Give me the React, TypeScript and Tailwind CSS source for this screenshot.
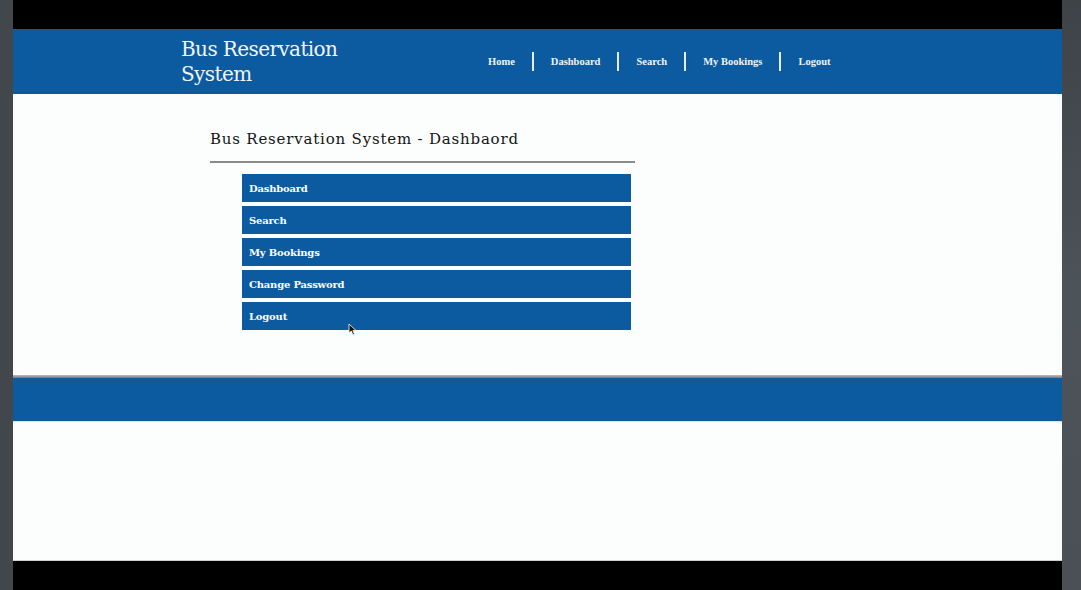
import React from "react";

const NAV = ["Home", "Dashboard", "Search", "My Bookings", "Logout"];
const MENU = ["Dashboard", "Search", "My Bookings", "Change Password", "Logout"];

const serif = "font-['DejaVu_Serif','Liberation_Serif',serif]";

export default function App() {
  return (
    <div className={`flex h-[590px] w-[1081px] overflow-hidden bg-black ${serif}`}>
      <div className="w-[13px] shrink-0 bg-[#41474a]" />

      <div className="flex w-[1049px] shrink-0 flex-col">
        <div className="h-[29px] bg-black" />

        <header className="flex h-[65px] items-center bg-[#0c5a9f] text-white">
          <div className="w-[168px] shrink-0" />
          <h1 className="w-[290px] shrink-0 text-[20px] leading-[25px] tracking-[-0.6px] text-[#f1f6fb]">
            Bus Reservation
            <br />
            System
          </h1>
          <nav className="flex items-center font-['Liberation_Serif',serif]">
            {NAV.map((n, i) => (
              <React.Fragment key={n}>
                {i > 0 && <span className="h-[19px] w-[2px] bg-[#e8eef6]" />}
                <a className="px-[17px] text-[10.5px] font-bold text-[#eef3f9]">{n}</a>
              </React.Fragment>
            ))}
          </nav>
        </header>

        <main className="relative h-[281px] bg-[#fbfefd] pl-[197px] pt-[35px]">
          <h2 className="text-[15px] leading-[20px] tracking-[0.8px] text-[#141414]">
            Bus Reservation System - Dashbaord
          </h2>
          <div className="mt-[12px] h-[2px] w-[425px] bg-[#8a8a8a]" />
          <ul className="ml-[32px] mt-[11px] flex w-[389px] flex-col gap-[4px]">
            {MENU.map((m) => (
              <li
                key={m}
                className="flex h-[28px] items-center bg-[#0c5a9f] pl-[7px] text-[10px] font-bold tracking-[-0.2px] text-white"
              >
                {m}
              </li>
            ))}
          </ul>
          {/* mouse pointer */}
          <svg className="absolute left-[335px] top-[229px]" width="9" height="13" viewBox="0 0 9 13">
            <path d="M1 1 L1 10 L3.3 8 L5 12 L6.5 11.3 L4.9 7.5 L8 7.5 Z" fill="#111" stroke="#fff" strokeWidth="0.8" />
          </svg>
        </main>

        <div className="h-[3px] bg-gradient-to-b from-[#c9b9b4] to-[#6d7c8a]" />
        <footer className="h-[43px] bg-[#0c5a9f]" />
        <div className="h-[1px] bg-[#cfe6fa]" />
        <div className="h-[138px] bg-[#fbfefd]" />
        <div className="h-[1px] bg-[#d0d0d0]" />
        <div className="flex-1 bg-black" />
      </div>

      <div className="w-[19px] shrink-0 bg-gradient-to-b from-[#3d4347] via-[#4d5459] to-[#4a5055]" />
    </div>
  );
}
